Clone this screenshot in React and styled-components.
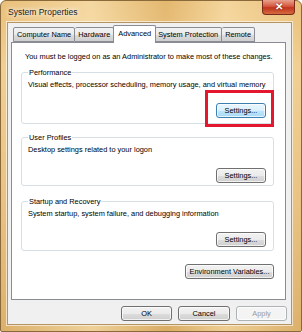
import React from "react";
import styled, { createGlobalStyle } from "styled-components";

const Global = createGlobalStyle`
  html, body { margin: 0; padding: 0; background: #fff; }
  body { font-family: "Liberation Sans", Arial, sans-serif; }
`;

const FS = "7.4px";

const Window = styled.div`
  width: 302px;
  height: 332px;
  box-sizing: border-box;
  display: flex;
  flex-direction: column;
  padding: 0 9px 6px 6px;
  border: 1px solid #8a6a3a;
  border-radius: 6px 6px 2px 2px;
  background:
    linear-gradient(90deg, rgba(255,255,255,0) 0%, rgba(255,240,200,0.5) 30%, rgba(210,160,80,0.25) 55%, rgba(255,235,190,0.5) 75%, rgba(255,255,255,0) 100%),
    linear-gradient(180deg, #e9bf7a 0%, #f1cf92 20%, #e9c283 60%, #dcb06a 100%);
`;

const TitleBar = styled.div`
  height: 21px;
  display: flex;
  align-items: flex-start;
  justify-content: space-between;
`;

const Title = styled.div`
  font-size: 8.5px;
  color: #1a1a1a;
  padding: 6px 0 0 1px;
  text-shadow: 0 0 4px #fff, 0 0 6px #fff;
`;

const CloseButton = styled.div`
  width: 33px;
  height: 15px;
  margin-top: -1px;
  margin-right: -3px;
  box-sizing: border-box;
  border: 1px solid #7a2a1a;
  border-top: none;
  border-radius: 0 0 4px 4px;
  background: linear-gradient(180deg, #e8a190 0%, #d5583e 45%, #c1341c 55%, #d66a40 100%);
  display: flex;
  align-items: center;
  justify-content: center;
  color: #fff;
  font-size: 10px;
  font-weight: bold;
  line-height: 1;
  text-shadow: 0 0 2px #5a1000;
`;

const Client = styled.div`
  flex: 1;
  display: flex;
  flex-direction: column;
  background: #f0f0f0;
  border: 1px solid #b69462;
  box-shadow: 0 0 0 1px rgba(255,255,255,0.6);
  padding: 3px 5px 0 3px;
`;

const Tabs = styled.div`
  display: flex;
  align-items: flex-end;
  height: 17px;
  padding-left: 2px;
  position: relative;
  z-index: 1;
  margin-bottom: -1px;
`;

const Tab = styled.div`
  font-size: ${FS};
  color: #000;
  box-sizing: border-box;
  height: ${(p) => (p.$active ? "18px" : "15px")};
  padding: ${(p) => (p.$active ? "3px 4px 0" : "2px 3px 0")};
  margin: ${(p) => (p.$active ? "0 -1px" : "0 0 1px 0")};
  border: 1px solid #898c95;
  border-bottom: ${(p) => (p.$active ? "none" : "1px solid #898c95")};
  border-left: ${(p) => (p.$first || p.$active ? "1px solid #898c95" : "none")};
  border-radius: 2px 2px 0 0;
  background: ${(p) =>
    p.$active ? "#fff" : "linear-gradient(180deg, #f2f2f2 0%, #ebebeb 50%, #dddddd 51%, #cfcfcf 100%)"};
  white-space: nowrap;
  position: relative;
  z-index: ${(p) => (p.$active ? 2 : 1)};
`;

const Panel = styled.div`
  height: 258px;
  box-sizing: border-box;
  background: #fff;
  border: 1px solid #898c95;
  padding: 8px 11px 0 9px;
  display: flex;
  flex-direction: column;
`;

const Notice = styled.div`
  font-size: ${FS};
  line-height: 11px;
  padding-left: 4px;
  margin-bottom: 5px;
  white-space: nowrap;
`;

const Group = styled.fieldset`
  margin: 0 0 ${(p) => p.$gap || 0}px 0;
  padding: 1px 7px 0 7px;
  border: 1px solid #d5dfe5;
  border-radius: 3px;
  height: ${(p) => p.$h}px;
  box-sizing: border-box;
  display: flex;
  flex-direction: column;
  min-width: 0;
`;

const Legend = styled.legend`
  font-size: ${FS};
  line-height: 11px;
  padding: 0 1px;
  margin-left: -1px;
`;

const Desc = styled.div`
  font-size: ${FS};
  line-height: 11px;
  margin-left: -1px;
  white-space: nowrap;
`;

const ButtonRow = styled.div`
  display: flex;
  justify-content: flex-end;
  margin-top: ${(p) => p.$mt || 0}px;
  margin-right: ${(p) => p.$mr || 0}px;
  gap: ${(p) => p.$gap || 0}px;
`;

const Button = styled.div`
  width: ${(p) => p.$w}px;
  height: 15px;
  box-sizing: border-box;
  border: 1px solid #707070;
  border-radius: 3px;
  background: ${(p) =>
    p.$focus
      ? "linear-gradient(180deg, #eaf6fd 0%, #d9f0fc 50%, #bee6fd 51%, #a7d9f5 100%)"
      : "linear-gradient(180deg, #f2f2f2 0%, #ebebeb 50%, #dddddd 51%, #cfcfcf 100%)"};
  border-color: ${(p) => (p.$focus ? "#3c7fb1" : p.$disabled ? "#adb2b5" : "#707070")};
  box-shadow: inset 0 0 0 1px rgba(255,255,255,0.7);
  font-size: ${FS};
  color: ${(p) => (p.$disabled ? "#9a9a9a" : "#000")};
  display: flex;
  align-items: center;
  justify-content: center;
  white-space: nowrap;
  ${(p) => p.$disabled && "background: #f4f4f4;"}
`;

const Highlight = styled.div`
  position: relative;
  &::after {
    content: "";
    position: absolute;
    left: -11px;
    right: -8px;
    top: -13px;
    bottom: -9px;
    border: 3px solid #e3172e;
    pointer-events: none;
  }
`;

const Footer = styled.div`
  display: flex;
  justify-content: flex-end;
  gap: 6px;
  padding: 6px 0 0 0;
  margin-right: -1px;
`;

export default function App() {
  return (
    <>
      <Global />
      <Window>
        <TitleBar>
          <Title>System Properties</Title>
          <CloseButton>✕</CloseButton>
        </TitleBar>
        <Client>
          <Tabs>
            <Tab $first>Computer Name</Tab>
            <Tab>Hardware</Tab>
            <Tab $active>Advanced</Tab>
            <Tab>System Protection</Tab>
            <Tab>Remote</Tab>
          </Tabs>
          <Panel>
            <Notice>You must be logged on as an Administrator to make most of these changes.</Notice>
            <Group $h={57} $gap={8}>
              <Legend>Performance</Legend>
              <Desc>Visual effects, processor scheduling, memory usage, and virtual memory</Desc>
              <ButtonRow $mt={13} $mr={0}>
                <Highlight>
                  <Button $w={50} $focus>Settings...</Button>
                </Highlight>
              </ButtonRow>
            </Group>
            <Group $h={54} $gap={10}>
              <Legend>User Profiles</Legend>
              <Desc>Desktop settings related to your logon</Desc>
              <ButtonRow $mt={13} $mr={0}>
                <Button $w={50}>Settings...</Button>
              </ButtonRow>
            </Group>
            <Group $h={55} $gap={10}>
              <Legend>Startup and Recovery</Legend>
              <Desc>System startup, system failure, and debugging information</Desc>
              <ButtonRow $mt={13} $mr={0}>
                <Button $w={50}>Settings...</Button>
              </ButtonRow>
            </Group>
            <ButtonRow $mt={3}>
              <Button $w={89}>Environment Variables...</Button>
            </ButtonRow>
          </Panel>
          <Footer>
            <Button $w={51}>OK</Button>
            <Button $w={52}>Cancel</Button>
            <Button $w={51} $disabled>Apply</Button>
          </Footer>
        </Client>
      </Window>
    </>
  );
}
